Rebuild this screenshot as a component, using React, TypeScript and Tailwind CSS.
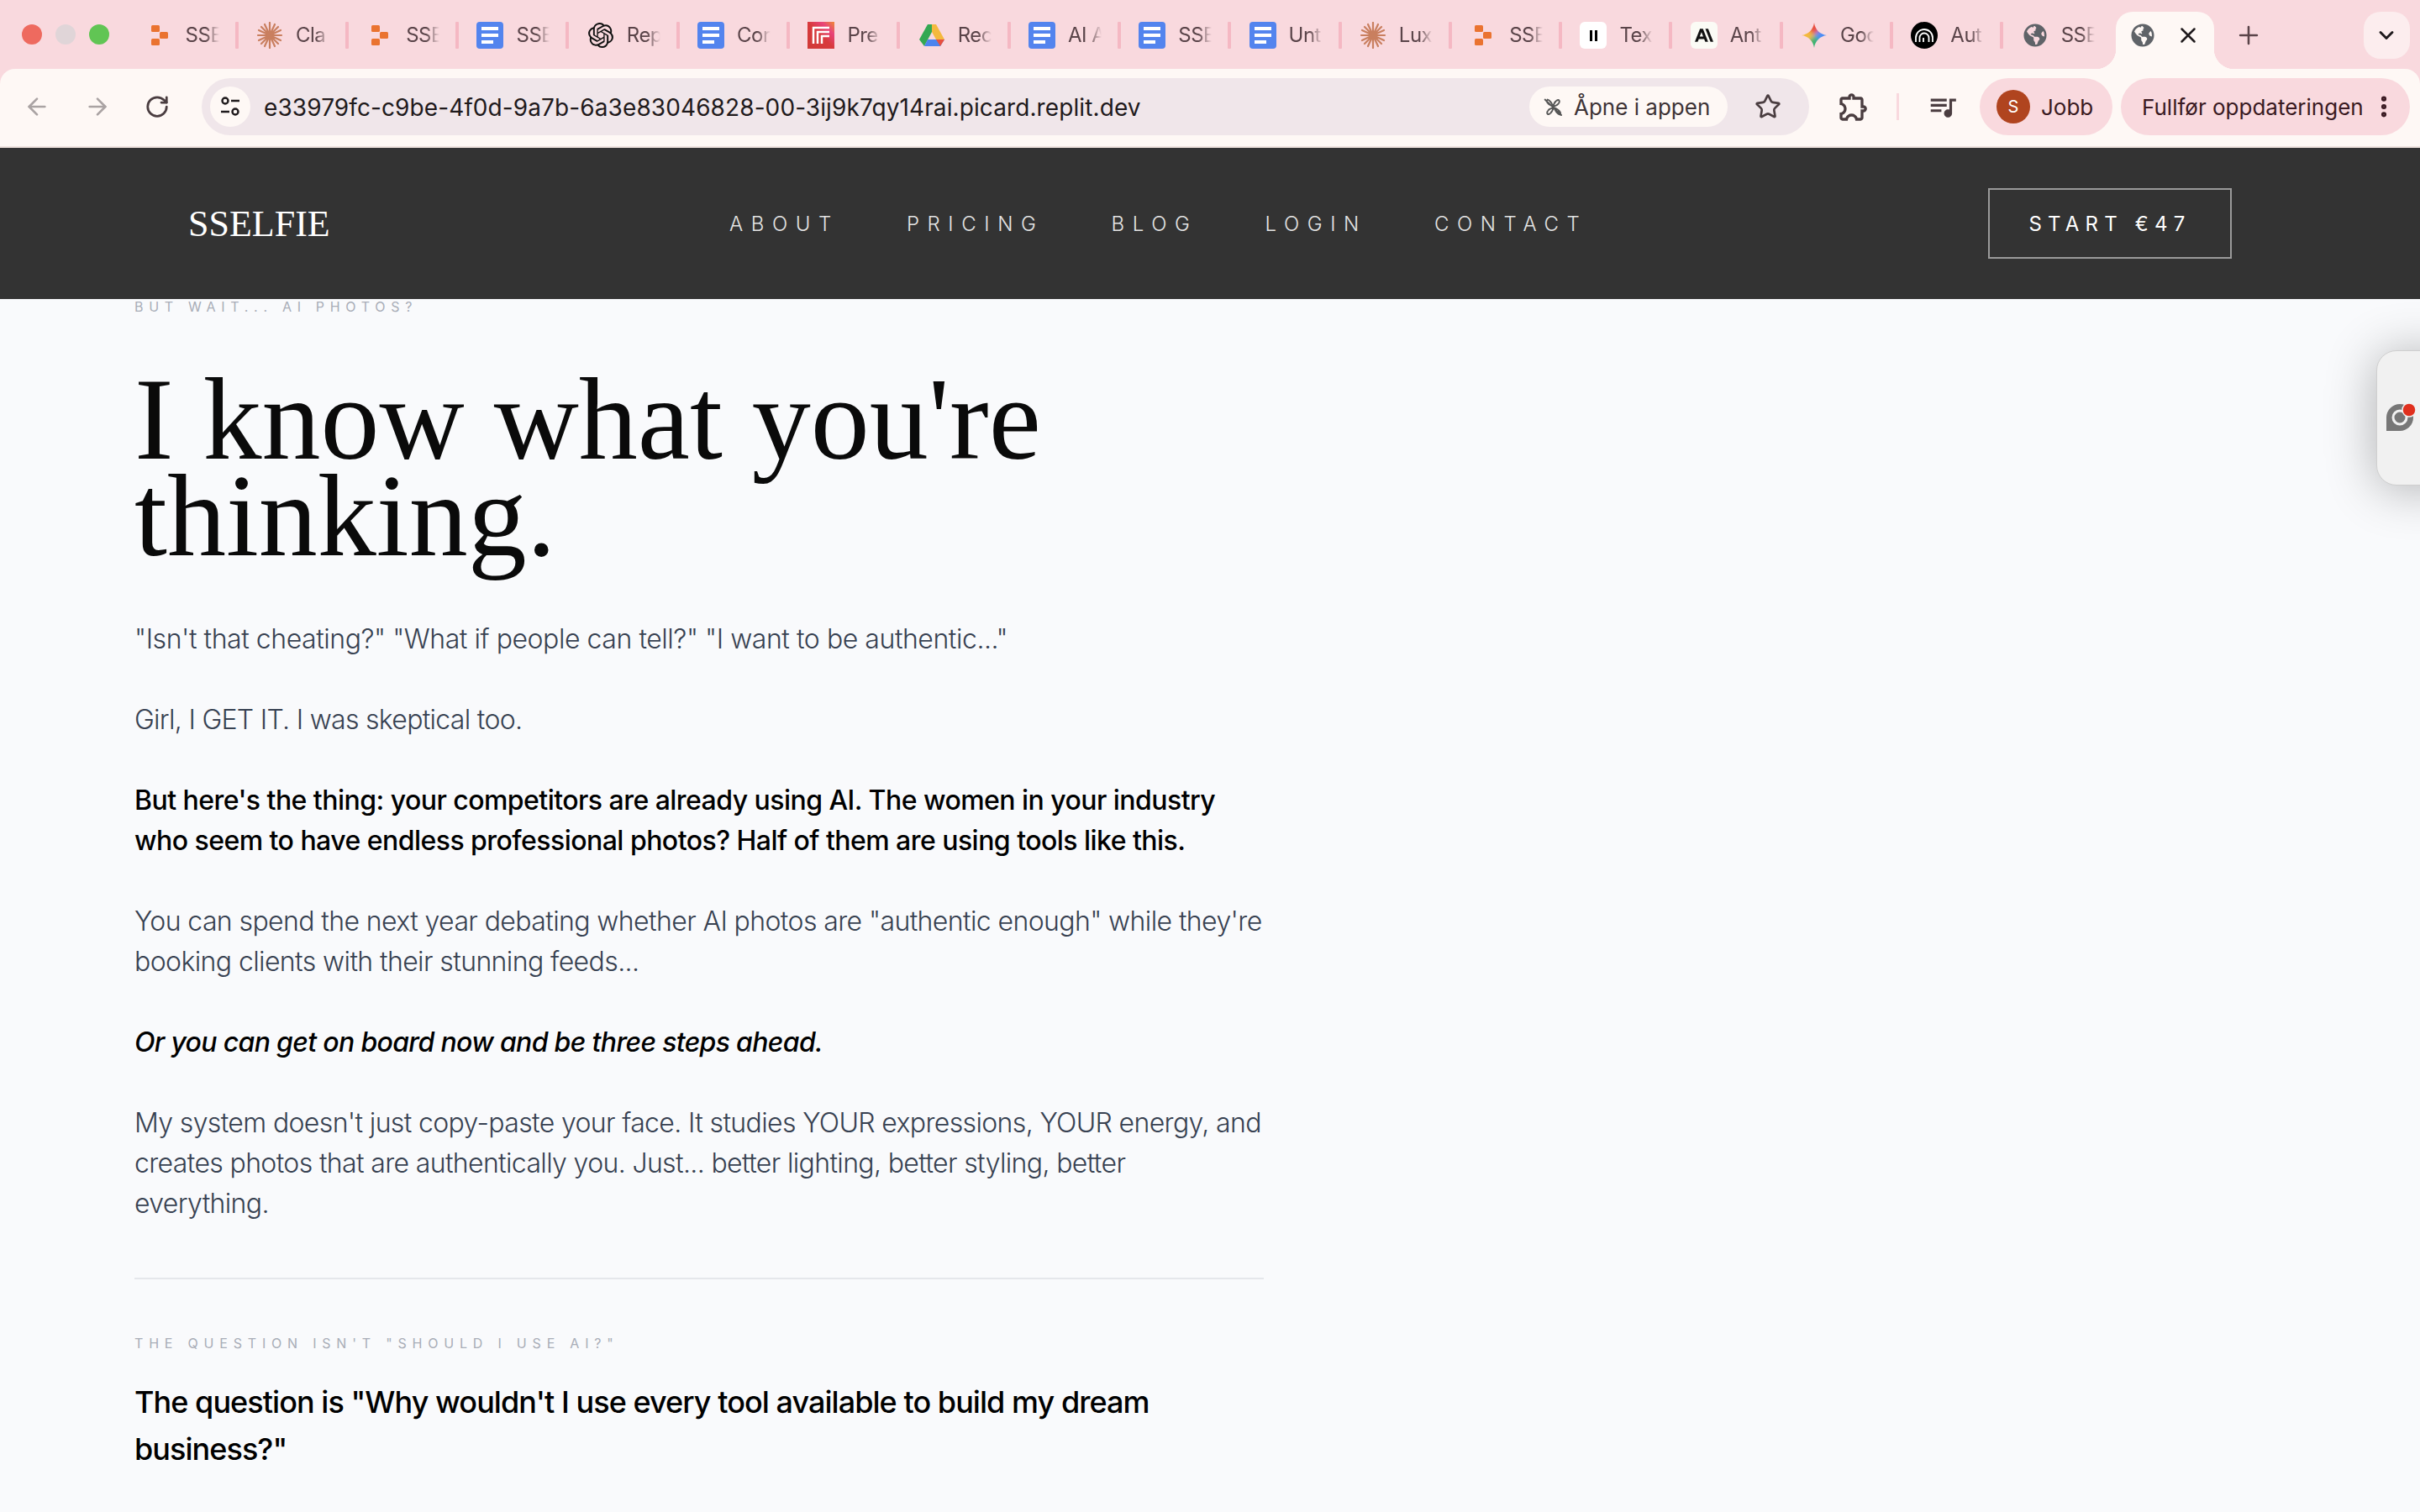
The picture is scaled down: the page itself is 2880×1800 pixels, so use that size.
import { Star, ArrowLeft, ArrowRight, RotateCw, Plus, X, ChevronDown, EllipsisVertical } from 'lucide-react';
import { FaGlobeAmericas } from 'react-icons/fa';
import { MdOutlineExtension, MdQueueMusic } from 'react-icons/md';
import { SiOpenai, SiAnthropic } from 'react-icons/si';

const sans = 'font-["Inter",sans-serif]';

const ReplitIcon = () => (
    <svg width="32" height="32" viewBox="0 0 32 32" fill="#ea7330">
        <rect x="6" y="4" width="10" height="8" rx="1.5" />
        <rect x="16" y="12" width="10" height="8" rx="1.5" />
        <rect x="6" y="20" width="10" height="8" rx="1.5" />
    </svg>
);

const ClaudeIcon = () => (
    <svg width="32" height="32" viewBox="0 0 32 32" stroke="#c97f5f" strokeWidth="2.2" strokeLinecap="round">
        <path d="M16 1v30M2 16h28M6 6l20 20M26 6L6 26M10 3l12 26M22 3L10 29M3 10l26 12M29 10L3 22" />
        <circle cx="16" cy="16" r="4" fill="#c97f5f" stroke="none" />
    </svg>
);

const DocIcon = () => (
    <svg width="32" height="32" viewBox="0 0 32 32">
        <rect width="32" height="32" rx="4" fill="#5384ee" />
        <path d="M6 6h20v4H6zM6 14h20v4H6zM6 22h14v4H6z" fill="#fff" />
    </svg>
);

const PreIcon = () => (
    <svg width="32" height="32" viewBox="0 0 32 32">
        <defs>
            <linearGradient id="pre" x1="0" y1="1" x2="1" y2="0">
                <stop offset="0" stopColor="#d03a36" />
                <stop offset="0.5" stopColor="#d83a3c" />
                <stop offset="0.75" stopColor="#e8437a" />
                <stop offset="1" stopColor="#ee8a35" />
            </linearGradient>
        </defs>
        <rect width="32" height="32" fill="url(#pre)" />
        <path d="M7 26V7h19M12 26V12h14M17 26V17h9" fill="none" stroke="#fff" strokeWidth="2.5" />
    </svg>
);

const DriveIcon = () => (
    <svg width="32" height="32" viewBox="0 0 32 32">
        <path d="M11 3h5v9L7 29l-6-8z" fill="#34a853" />
        <path d="M16 3h5l10 18H21l-5-9z" fill="#f4b93e" />
        <path d="M11 21h20l-5 8H7z" fill="#4c84ee" />
        <path d="M21 21h10l-5 8z" fill="#e8503f" />
    </svg>
);

const TexIcon = () => (
    <div className="flex h-[32px] w-[32px] items-center justify-center rounded-md bg-white">
        <div className="flex gap-[3px]">
            <span className="h-[13px] w-[3px] bg-black" />
            <span className="h-[13px] w-[3px] bg-black" />
        </div>
    </div>
);

const AnthropicIcon = () => (
    <div className="flex h-[32px] w-[32px] items-center justify-center rounded-md bg-[#fbfbf5]">
        <SiAnthropic size={22} color="#111" />
    </div>
);

const GeminiIcon = () => (
    <svg width="32" height="32" viewBox="0 0 32 32">
        <defs>
            <clipPath id="gem-star">
                <path d="M16 1C17 9 23 15 31 16 23 17 17 23 16 31 15 23 9 17 1 16 9 15 15 9 16 1Z" />
            </clipPath>
            <filter id="gem-blur">
                <feGaussianBlur stdDeviation="2.5" />
            </filter>
        </defs>
        <g clipPath="url(#gem-star)">
            <g filter="url(#gem-blur)">
                <path d="M16 16L-4 -4h40z" fill="#e8503f" />
                <path d="M16 16L36 -4v40z" fill="#4c8cf5" />
                <path d="M16 16l20 20H-4z" fill="#3cb371" />
                <path d="M16 16L-4 36V-4z" fill="#f4b93e" />
            </g>
        </g>
    </svg>
);

const AutIcon = () => (
    <svg width="32" height="32" viewBox="0 0 32 32" fill="none" stroke="#fff" strokeWidth="1.8">
        <circle cx="16" cy="16" r="16" fill="#000" stroke="none" />
        <path d="M6 24v-5a10 10 0 0 1 20 0v5M10.500 24v-5a5.500 5.500 0 0 1 11 0v5M15 24v-5" />
    </svg>
);

const Globe = () => <FaGlobeAmericas size={28} color="#5f6368" />;

const tabs = [
    { icon: <ReplitIcon />, title: 'SSE' },
    { icon: <ClaudeIcon />, title: 'Cla' },
    { icon: <ReplitIcon />, title: 'SSE' },
    { icon: <DocIcon />, title: 'SSE' },
    { icon: <SiOpenai size={30} color="#111" />, title: 'Rep' },
    { icon: <DocIcon />, title: 'Cor' },
    { icon: <PreIcon />, title: 'Pre' },
    { icon: <DriveIcon />, title: 'Rec' },
    { icon: <DocIcon />, title: 'AI A' },
    { icon: <DocIcon />, title: 'SSE' },
    { icon: <DocIcon />, title: 'Unt' },
    { icon: <ClaudeIcon />, title: 'Lux' },
    { icon: <ReplitIcon />, title: 'SSE' },
    { icon: <TexIcon />, title: 'Tex' },
    { icon: <AnthropicIcon />, title: 'Ant' },
    { icon: <GeminiIcon />, title: 'Goo' },
    { icon: <AutIcon />, title: 'Aut' },
    { icon: <Globe />, title: 'SSE' },
];

const navLinks = ['ABOUT', 'PRICING', 'BLOG', 'LOGIN', 'CONTACT'];

function TabStrip() {
    return (
        <div className="flex h-[82px] items-start bg-[#f9d9de] pt-[14px]">
            <div className="flex h-[54px] w-[154.6px] items-center gap-[16px] pl-[26px]">
                <span className="h-[24px] w-[24px] rounded-full bg-[#ee6a5f]" />
                <span className="h-[24px] w-[24px] rounded-full bg-[#e0d5d8]" />
                <span className="h-[24px] w-[24px] rounded-full bg-[#61c554]" />
            </div>
            {tabs.map((tab, i) => (
                <div key={i} className="flex h-[56px] w-[131.3px] items-center pl-[19px]">
                    <div className="flex h-[32px] w-[32px] shrink-0 items-center justify-center">{tab.icon}</div>
                    <span className={`ml-[15px] w-[40px] overflow-hidden whitespace-nowrap text-[24px] tracking-[-0.5px] text-[#5a4449] [mask-image:linear-gradient(to_right,#000_60%,transparent)] ${sans}`}>
                        {tab.title}
                    </span>
                    {i < tabs.length - 1 && <span className="ml-[19px] h-[32px] w-[4px] shrink-0 rounded-[1px] bg-[#f5b8c3]" />}
                </div>
            ))}
            <div className="relative flex h-[68px] w-[117px] shrink-0 items-start rounded-t-[20px] bg-[#fef8f5] pl-[18px]">
                <span className="absolute bottom-0 left-[-24px] h-[24px] w-[24px] bg-[radial-gradient(circle_at_0_0,#f9d9de_24px,#fef8f5_24.5px)]" />
                <span className="absolute bottom-0 right-[-24px] h-[24px] w-[24px] bg-[radial-gradient(circle_at_100%_0,#f9d9de_24px,#fef8f5_24.5px)]" />
                <div className="flex h-[56px] items-center gap-[25px]">
                    <Globe />
                    <X size={30} strokeWidth={2} color="#1f1a1c" />
                </div>
            </div>
            <div className="flex h-[56px] items-center pl-[24px]">
                <Plus size={34} color="#5a4449" strokeWidth={1.8} />
                <div className="ml-[120px] flex h-[56px] w-[55px] shrink-0 items-center justify-center rounded-[20px] bg-[#fcedee]">
                    <ChevronDown size={28} strokeWidth={2.5} color="#1f1a1c" />
                </div>
            </div>
        </div>
    );
}

function Toolbar() {
    return (
        <div className="bg-[#f9d9de]">
            <div className="flex h-[94px] items-center rounded-t-[18px] border-b-2 border-[#efe3df] bg-[#fef8f5] pb-[2px]">
                <div className="flex w-[240px] shrink-0 items-center gap-[40px] pl-[28px]">
                    <ArrowLeft size={32} color="#aaa3a3" />
                    <ArrowRight size={32} color="#aaa3a3" />
                    <RotateCw size={30} color="#4a3d40" strokeWidth={2.2} />
                </div>
                <div className="flex h-[68px] w-[1913px] shrink-0 items-center rounded-full bg-[#f0e6ea] pl-[10px] pr-[33px]">
                    <div className="flex h-[48px] w-[48px] items-center justify-center rounded-full bg-[#fef8f5]">
                        <svg width="28" height="28" viewBox="0 0 28 28" fill="none" stroke="#1f1a1c" strokeWidth="2.4">
                            <circle cx="8" cy="7" r="3.5" />
                            <path d="M15 7h10M3 20h10" />
                            <circle cx="20" cy="20" r="3.5" />
                        </svg>
                    </div>
                    <span className={`ml-[16px] mt-[2px] whitespace-nowrap text-[28px] tracking-[0.1px] text-[#1f1a1c] ${sans}`}>
                        e33979fc-c9be-4f0d-9a7b-6a3e83046828-00-3ij9k7qy14rai.picard.replit.dev
                    </span>
                    <div className={`ml-auto flex h-[48px] w-[236px] items-center rounded-full bg-[#fef8f5] pl-[16px] text-[26px] text-[#3d3336] ${sans}`}>
                        <svg width="25" height="25" viewBox="0 0 28 28" stroke="#555" strokeWidth="2.2" strokeLinecap="round" strokeDasharray="3 1.500">
                            <path d="M3 4l22 21M14 13c-2-4-5-9-8-9-2 2 1 7 8 9zM14 13c5-1 9-4 8-8-2-2-7 2-8 8zM14 15c-5 1-9 4-8 8 2 2 7-2 8-8zM15 15c2 4 5 9 8 9 2-2-1-7-8-9z" fill="none" />
                        </svg>
                        <span className="ml-[12px]">Åpne i appen</span>
                    </div>
                    <Star size={32} color="#4a3d40" strokeWidth={2} className="ml-[32px]" />
                </div>
                <MdOutlineExtension size={40} color="#4a3d40" className="ml-[33px]" />
                <span className="ml-[31px] h-[32px] w-[3px] bg-[#f9d9de]" />
                <MdQueueMusic size={38} color="#4a3d40" className="ml-[33px]" />
                <div className={`ml-[25px] flex h-[68px] w-[158px] items-center rounded-full bg-[#f9d9de] pl-[20px] text-[26px] text-[#3a1a22] ${sans}`}>
                    <span className="flex h-[40px] w-[40px] items-center justify-center rounded-full bg-[#b0441f] text-[20px] text-white">S</span>
                    <span className="ml-[13px]">Jobb</span>
                </div>
                <div className={`ml-[10px] flex h-[68px] w-[344px] items-center rounded-full bg-[#f9d9de] pl-[25px] text-[26px] text-[#3a1a22] ${sans}`}>
                    <span className="whitespace-nowrap">Fullfør oppdateringen</span>
                    <EllipsisVertical size={32} color="#3a1a22" strokeWidth={2.6} className="ml-[8px]" />
                </div>
            </div>
        </div>
    );
}

function SiteNav() {
    return (
        <header className="flex h-[180px] items-center bg-[#333333] pl-[224px] pr-[224px]">
            <span className="mt-[2px] w-[644px] font-['Liberation_Serif',serif] text-[44px] text-white">SSELFIE</span>
            <nav className={`mt-[2px] flex gap-[80px] text-[24px] font-light tracking-[0.4em] text-[#e4e4e4] ${sans}`}>
                {navLinks.map(link => (
                    <a key={link}>{link}</a>
                ))}
            </nav>
            <a className={`ml-auto flex h-[84px] w-[290px] items-center justify-center border-2 border-[#9a9a9a] pt-[2px] text-[24px] font-normal tracking-[0.3em] text-white ${sans}`}>
                START €47
            </a>
        </header>
    );
}

function Article() {
    return (
        <main className={`max-w-[1504px] pl-[160px] text-[32px] font-light leading-[48px] tracking-[-0.45px] text-[#374151] ${sans}`}>
            <p className="pt-[1px] text-[16px] font-normal leading-[16px] tracking-[6.7px] text-[#a8adb7]">BUT WAIT... AI PHOTOS?</p>
            <h1 className="mt-[68px] font-['Liberation_Serif',serif] text-[140px] font-normal leading-[115px] tracking-normal text-[#0a0a0a]">
                I know what you're thinking.
            </h1>
            <p className="mt-[66px]">"Isn't that cheating?" "What if people can tell?" "I want to be authentic..."</p>
            <p className="mt-[48px] tracking-[-0.7px]">Girl, I GET IT. I was skeptical too.</p>
            <p className="mt-[48px] font-medium tracking-[-0.54px] text-black">
                But here's the thing: your competitors are already using AI. The women in your industry who seem to have endless professional photos? Half of them are using tools like this.
            </p>
            <p className="mt-[48px] tracking-[-0.6px]">
                You can spend the next year debating whether AI photos are "authentic enough" while they're booking clients with their stunning feeds...
            </p>
            <p className="mt-[48px] font-medium italic tracking-[-0.67px] text-black">Or you can get on board now and be three steps ahead.</p>
            <p className="mt-[48px] tracking-[-0.64px]">
                My system doesn't just copy-paste your face. It studies YOUR expressions, YOUR energy, and creates photos that are authentically you. Just... better lighting, better styling, better everything.
            </p>
            <div className="mt-[64px] h-[2px] bg-[#e5e7eb]" />
            <p className="mt-[64px] text-[16px] font-normal leading-[24px] tracking-[6.8px] text-[#a8adb7]">THE QUESTION ISN'T "SHOULD I USE AI?"</p>
            <p className="mt-[30px] text-[36px] font-medium leading-[56px] tracking-[-0.95px] text-black">
                The question is "Why wouldn't I use every tool available to build my dream business?"
            </p>
        </main>
    );
}

export default function App() {
    return (
        <div className="relative h-[1800px] w-[2880px] overflow-hidden bg-[#f9fafc]">
            <TabStrip />
            <Toolbar />
            <SiteNav />
            <Article />
            {/* floating widget stuck to the right edge */}
            <div className="absolute left-[2828px] top-[417px] h-[161px] w-[100px] rounded-[24px] border border-[#cfcfcf] bg-[#f1f1f1] shadow-[0_4px_60px_rgba(0,0,0,0.3)]">
                <svg className="absolute left-[10px] top-[61px]" width="38" height="36" viewBox="0 0 38 36">
                    <path d="M1 34V18A16 16 0 1 1 17 34Z" fill="#777" />
                    <circle cx="17" cy="18" r="8" fill="none" stroke="#f1f1f1" strokeWidth="3" />
                    <circle cx="28" cy="9" r="8" fill="#e0301e" stroke="#f1f1f1" strokeWidth="1.5" />
                </svg>
            </div>
        </div>
    );
}
